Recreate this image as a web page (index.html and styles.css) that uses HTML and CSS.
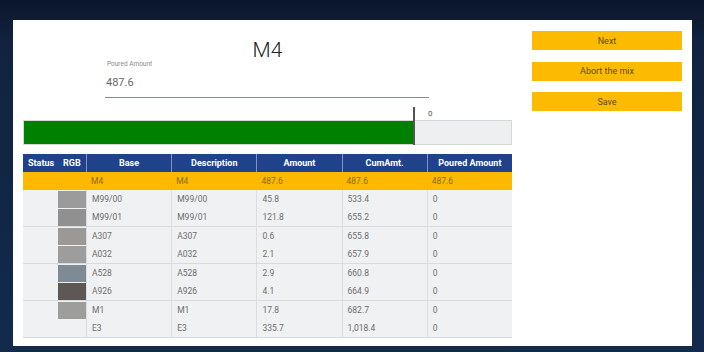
FILE: index.html
```html
<!DOCTYPE html>
<html lang="en">
<head>
    <meta charset="UTF-8" />
    <meta name="viewport" content="width=device-width, initial-scale=1.0" />
    <title>Mix M4</title>
    <link rel="stylesheet" href="styles.css">
</head>
<body>
    <div class="panel">
        <main class="mix">
            <h1 class="title">M4</h1>

            <div class="field">
                <label class="field-label">Poured Amount</label>
                <div class="field-value">487.6</div>
            </div>

            <div class="progress">
                <span class="marker"></span>
                <span class="marker-label">0</span>
                <div class="bar"><div class="bar-fill" style="width: 80%"></div></div>
            </div>

            <table class="components">
                <colgroup>
                    <col class="c-status"><col class="c-rgb"><col><col><col><col><col>
                </colgroup>
                <thead>
                    <tr>
                        <th class="left">Status</th>
                        <th class="left">RGB</th>
                        <th>Base</th>
                        <th>Description</th>
                        <th>Amount</th>
                        <th>CumAmt.</th>
                        <th>Poured Amount</th>
                    </tr>
                </thead>
                <tbody>
                    <tr class="current">
                        <td></td><td></td>
                        <td class="txt">M4</td><td class="txt">M4</td>
                        <td class="txt">487.6</td><td class="txt">487.6</td><td class="txt">487.6</td>
                    </tr>

                    <tr>
                        <td class="status end" rowspan="2"></td>
                        <td class="rgb"><div class="swatch" style="background: #9b9b9b"></div></td>
                        <td class="txt">M99/00</td><td class="txt">M99/00</td>
                        <td class="txt">45.8</td><td class="txt">533.4</td><td class="txt">0</td>
                    </tr>
                    <tr class="end">
                        <td class="rgb"><div class="swatch" style="background: #909090"></div></td>
                        <td class="txt">M99/01</td><td class="txt">M99/01</td>
                        <td class="txt">121.8</td><td class="txt">655.2</td><td class="txt">0</td>
                    </tr>

                    <tr>
                        <td class="status end" rowspan="2"></td>
                        <td class="rgb"><div class="swatch" style="background: #9c9896"></div></td>
                        <td class="txt">A307</td><td class="txt">A307</td>
                        <td class="txt">0.6</td><td class="txt">655.8</td><td class="txt">0</td>
                    </tr>
                    <tr class="end">
                        <td class="rgb"><div class="swatch" style="background: #9d9d9d"></div></td>
                        <td class="txt">A032</td><td class="txt">A032</td>
                        <td class="txt">2.1</td><td class="txt">657.9</td><td class="txt">0</td>
                    </tr>

                    <tr>
                        <td class="status end" rowspan="2"></td>
                        <td class="rgb"><div class="swatch" style="background: #7e8a94"></div></td>
                        <td class="txt">A528</td><td class="txt">A528</td>
                        <td class="txt">2.9</td><td class="txt">660.8</td><td class="txt">0</td>
                    </tr>
                    <tr class="end">
                        <td class="rgb"><div class="swatch" style="background: #5e5854"></div></td>
                        <td class="txt">A926</td><td class="txt">A926</td>
                        <td class="txt">4.1</td><td class="txt">664.9</td><td class="txt">0</td>
                    </tr>

                    <tr>
                        <td class="status end" rowspan="2"></td>
                        <td class="rgb"><div class="swatch" style="background: #9d9d9b"></div></td>
                        <td class="txt">M1</td><td class="txt">M1</td>
                        <td class="txt">17.8</td><td class="txt">682.7</td><td class="txt">0</td>
                    </tr>
                    <tr class="end">
                        <td class="rgb"></td>
                        <td class="txt">E3</td><td class="txt">E3</td>
                        <td class="txt">335.7</td><td class="txt">1,018.4</td><td class="txt">0</td>
                    </tr>
                </tbody>
            </table>
        </main>

        <aside class="actions">
            <button class="btn">Next</button>
            <button class="btn">Abort the mix</button>
            <button class="btn">Save</button>
        </aside>
    </div>
</body>
</html>
```

FILE: styles.css
```css
* { box-sizing: border-box; }

body {
    margin: 0;
    padding: 20px 12px 6px 13px;
    font-family: Roboto, "Liberation Sans", Arial, sans-serif;
    background: linear-gradient(180deg, #0c1629 0%, #11233f 12%, #132a4b 100%);
}

.panel {
    display: flex;
    gap: 20px;
    width: 679px;
    height: 326px;
    padding: 0 10px;
    background: #fff;
}

.mix {
    width: 489px;
    padding-top: 19px;
}

.title {
    margin: 0;
    font-size: 21px;
    font-weight: 300;
    line-height: 22px;
    color: #222;
    text-align: center;
}

/* poured amount input */
.field {
    margin-left: 82px;
    margin-top: -1px;
    width: 324px;
}
.field-label {
    display: block;
    padding-left: 2px;
    font-size: 6.5px;
    line-height: 8px;
    color: #8a8a8a;
}
.field-value {
    margin-top: 8px;
    padding: 0 0 7px 1px;
    border-bottom: 1px solid #7d8ca3;
    font-size: 11px;
    line-height: 14px;
    color: #666;
}

/* progress */
.progress {
    position: relative;
    margin-top: 9px;
    padding-top: 13px;
}
.marker {
    position: absolute;
    left: 390px;
    top: 0;
    width: 2px;
    height: 38px;
    background: #555;
    z-index: 1;
}
.marker-label {
    position: absolute;
    left: 405px;
    top: 2px;
    font-size: 8px;
    line-height: 10px;
    color: #555;
}
.bar {
    height: 25px;
    border: 1px solid #d4d8d4;
    background: #eeeff1;
}
.bar-fill {
    height: 100%;
    background: #008000;
}

/* components table */
.components {
    width: 489px;
    margin-top: 9px;
    border-collapse: separate;
    border-spacing: 0;
    table-layout: fixed;
    font-size: 8.5px;
}
.c-status { width: 35px; }
.c-rgb { width: 28px; }

.components th {
    height: 18px;
    padding: 0 5px;
    background: #1f428a;
    color: #fff;
    font-size: 9px;
    font-weight: 700;
    text-align: center;
    border-left: 1px solid #8094bd;
}
.components th:first-child,
.components th:nth-child(2) { border-left: none; }
.components th.left { text-align: left; }

.components td {
    height: 18px;
    padding: 0 5px;
    background: #f0f1f3;
    color: #6e6e6e;
    line-height: 18px;
    white-space: nowrap;
}
.components td.txt { border-left: 1px solid #dcdde0; }

.components tr.current td {
    background: #fcb900;
    color: #8a6c12;
    border-left: none;
}

.components tr.end td,
.components td.end { border-bottom: 1px solid #d9dadd; }

.components td.rgb {
    padding: 0;
    vertical-align: top;
}
.swatch {
    height: 17px;
    margin-top: 1px;
}

/* buttons */
.actions {
    width: 150px;
    padding-top: 11px;
    display: flex;
    flex-direction: column;
    gap: 11.5px;
}
.btn {
    height: 19px;
    padding: 0;
    border: none;
    background: #fcbb00;
    color: #5d4c1c;
    font-family: inherit;
    font-size: 9px;
}
```
